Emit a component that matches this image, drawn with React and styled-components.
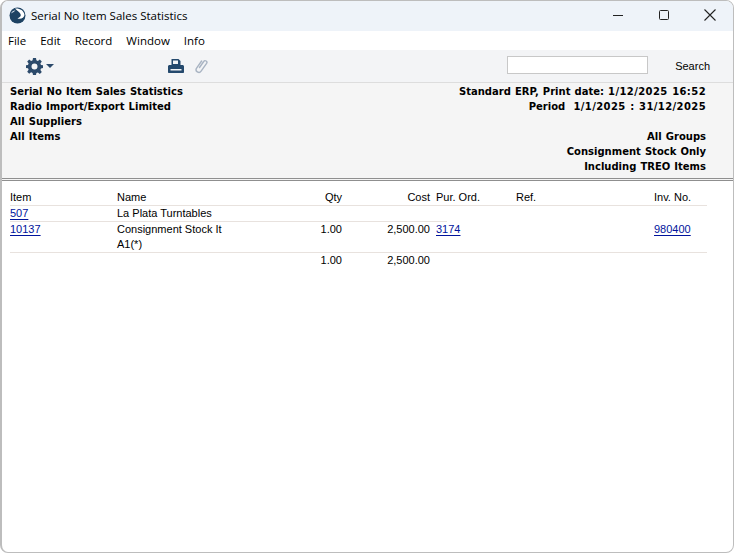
import React from "react";
import styled, { createGlobalStyle } from "styled-components";

const GlobalStyle = createGlobalStyle`
  html, body {
    margin: 0;
    padding: 0;
    background: #ffffff;
  }
  * {
    box-sizing: border-box;
  }
`;

const Window = styled.div`
  background: #ffffff;
  border: 1px solid #bdbdbd;
  border-left-width: 2px;
  border-radius: 8px;
  color: #000000;
  display: flex;
  flex-direction: column;
  font-family: "Liberation Sans", sans-serif;
  font-size: 11px;
  height: 553px;
  overflow: hidden;
  width: 734px;
`;

const TitleBar = styled.div`
  align-items: center;
  background: #eef3f9;
  display: flex;
  flex: 0 0 30px;
  padding: 0 0 2px 7px;
`;

const Title = styled.div`
  font-family: "Open Sans", sans-serif;
  font-size: 11.5px;
  margin-left: 5px;
`;

const WindowButtons = styled.div`
  display: flex;
  margin-left: auto;
`;

const WindowButton = styled.div`
  align-items: center;
  display: flex;
  height: 28px;
  justify-content: center;
  width: 46px;
`;

const MenuBar = styled.div`
  align-items: center;
  background: #ffffff;
  display: flex;
  flex: 0 0 19px;
  font-family: "Open Sans", sans-serif;
  font-size: 11.5px;
  gap: 14px;
  padding-left: 6px;
`;

const Toolbar = styled.div`
  align-items: center;
  background: #f3f4f6;
  border-bottom: 1px solid #dddddd;
  display: flex;
  flex: 0 0 33px;
  padding-left: 24px;
`;

const ToolIcons = styled.div`
  align-items: center;
  display: flex;
  gap: 11px;
  margin-left: 114px;
`;

const SearchInput = styled.div`
  background: #ffffff;
  border: 1px solid #c8c8c8;
  height: 18px;
  margin: 0 0 2px auto;
  width: 141px;
`;

const SearchLabel = styled.div`
  margin: 0 23px 0 27px;
`;

const ReportHeader = styled.div`
  background: #f5f5f5;
  border-bottom: 3px double #8f8f8f;
  display: flex;
  flex: 0 0 98px;
  font-family: "DejaVu Sans", sans-serif;
  font-size: 10px;
  font-weight: 700;
  justify-content: space-between;
  line-height: 15px;
  padding: 1px 27px 0 8px;
  word-spacing: 0.6px;
`;

const HeaderColumn = styled.div`
  text-align: ${(p) => (p.$right ? "right" : "left")};
  white-space: pre;
`;

const DateValue = styled.span`
  letter-spacing: 0.4px;
`;

const Sheet = styled.div`
  flex: 1;
  line-height: 15px;
  padding: 9px 0 0 8px;
`;

const Row = styled.div`
  border-bottom: ${(p) => (p.$plain ? "0" : "1px solid #e8e2de")};
  display: grid;
  grid-template-columns: 107px 150px 75px 88px 86px 138px 53px;
  width: 697px;
`;

const ShortRule = styled.div`
  background: #e8e2de;
  height: 1px;
  width: 437px;
`;

const Cell = styled.div`
  padding-left: ${(p) => (p.$inset ? "6px" : "0")};
  text-align: ${(p) => (p.$right ? "right" : "left")};
  white-space: nowrap;
`;

const DocLink = styled.span`
  color: #00139c;
  text-decoration: underline;
  text-underline-offset: 2px;
`;

const Logo = () => (
  <svg width="17" height="17" viewBox="0 0 17 17">
    <circle cx="8.500" cy="8.500" r="8" fill="#1d4263" />
    <path d="M6 1.500C10 1 15 3 15.500 8 15 11 12 12.500 8.500 11.500 11 10.500 12.500 8.500 11.500 7 10 4.500 7.500 3.500 6 1.500z" fill="#ffffff" />
    <path d="M2 6.500C3 4 5 3 6.500 3.500 5.500 4.500 4 5.500 2 6.500z" fill="#cfdbe6" />
  </svg>
);

const GearIcon = () => (
  <svg width="17" height="17" viewBox="0 0 17 17">
    <path
      fill="#2c4a6b"
      fillRule="evenodd"
      d="M7 0h3l.4 2.300 1.500.6L13.800 1.500l2 2-1.400 1.900.6 1.500L17 7.300v2.800l-2 .4-.6 1.500 1.400 1.900-2 2-1.900-1.400-1.500.6L10 17H7l-.4-2.100-1.500-.6-1.900 1.400-2-2 1.400-1.900-.6-1.500L0 10V7.300l2-.4.600-1.500L1.200 3.500l2-2 1.900 1.400 1.500-.6zM8.500 5.500a3 3 0 1 0 0 6 3 3 0 0 0 0-6z"
    />
  </svg>
);

const Caret = styled.div`
  border-left: 4px solid transparent;
  border-right: 4px solid transparent;
  border-top: 4px solid #2c4a6b;
  margin-left: 3px;
`;

const PrinterIcon = () => (
  <svg width="16" height="14" viewBox="0 0 16 14">
    <path
      fill="#24496d"
      d="M3.500 0h7L12.500 2v4h-9zM1.500 6h13c.8 0 1.500.7 1.500 1.500V13c0 .6-.4 1-1 1H1c-.6 0-1-.4-1-1V7.500C0 6.700.700 6 1.500 6z"
    />
    <rect x="5" y="1.500" width="5" height="3.500" fill="#f3f4f6" />
    <rect x="2.500" y="10" width="11" height="1.500" fill="#f3f4f6" />
  </svg>
);

const ClipIcon = () => (
  <svg width="14" height="16" viewBox="0 0 14 16" fill="none">
    <path
      stroke="#a9b4c3"
      strokeWidth="1.400"
      strokeLinecap="round"
      d="M4.500 9.500l4.200-6a1.700 1.700 0 0 1 2.900 1.900l-5.500 7.800a2.700 2.700 0 0 1-4.500-3l5-7.200"
    />
  </svg>
);

export default function App() {
  return (
    <>
      <GlobalStyle />
      <Window>
        <TitleBar>
          <Logo />
          <Title>Serial No Item Sales Statistics</Title>
          <WindowButtons>
            <WindowButton>
              <svg width="10" height="10" viewBox="0 0 10 10">
                <rect y="5" width="10" height="1" fill="#222222" />
              </svg>
            </WindowButton>
            <WindowButton>
              <svg width="10" height="10" viewBox="0 0 10 10" fill="none">
                <rect x="0.500" y="0.500" width="9" height="9" rx="1" stroke="#222222" />
              </svg>
            </WindowButton>
            <WindowButton>
              <svg width="12" height="12" viewBox="0 0 12 12" stroke="#222222" strokeWidth="1.100">
                <path d="M0.500 0.500l11 11M11.500 0.500l-11 11" />
              </svg>
            </WindowButton>
          </WindowButtons>
        </TitleBar>
        <MenuBar>
          <span>File</span>
          <span>Edit</span>
          <span>Record</span>
          <span>Window</span>
          <span>Info</span>
        </MenuBar>
        <Toolbar>
          <GearIcon />
          <Caret />
          <ToolIcons>
            <PrinterIcon />
            <ClipIcon />
          </ToolIcons>
          <SearchInput />
          <SearchLabel>Search</SearchLabel>
        </Toolbar>
        <ReportHeader>
          <HeaderColumn>
            <div>Serial No Item Sales Statistics</div>
            <div>Radio Import/Export Limited</div>
            <div>All Suppliers</div>
            <div>All Items</div>
          </HeaderColumn>
          <HeaderColumn $right>
            <div>Standard ERP, Print date: <DateValue>1/12/2025 16:52</DateValue></div>
            <div>Period  <DateValue>1/1/2025 : 31/12/2025</DateValue></div>
            <div>&nbsp;</div>
            <div>All Groups</div>
            <div>Consignment Stock Only</div>
            <div>Including TREO Items</div>
          </HeaderColumn>
        </ReportHeader>
        <Sheet>
          <Row>
            <Cell>Item</Cell>
            <Cell>Name</Cell>
            <Cell $right>Qty</Cell>
            <Cell $right>Cost</Cell>
            <Cell $inset>Pur. Ord.</Cell>
            <Cell>Ref.</Cell>
            <Cell>Inv. No.</Cell>
          </Row>
          <Row $plain>
            <Cell><DocLink>507</DocLink></Cell>
            <Cell>La Plata Turntables</Cell>
          </Row>
          <ShortRule />
          <Row>
            <Cell><DocLink>10137</DocLink></Cell>
            <Cell>
              Consignment Stock It
              <br />
              A1(*)
            </Cell>
            <Cell $right>1.00</Cell>
            <Cell $right>2,500.00</Cell>
            <Cell $inset><DocLink>3174</DocLink></Cell>
            <Cell />
            <Cell><DocLink>980400</DocLink></Cell>
          </Row>
          <Row $plain>
            <Cell />
            <Cell />
            <Cell $right>1.00</Cell>
            <Cell $right>2,500.00</Cell>
          </Row>
        </Sheet>
      </Window>
    </>
  );
}
